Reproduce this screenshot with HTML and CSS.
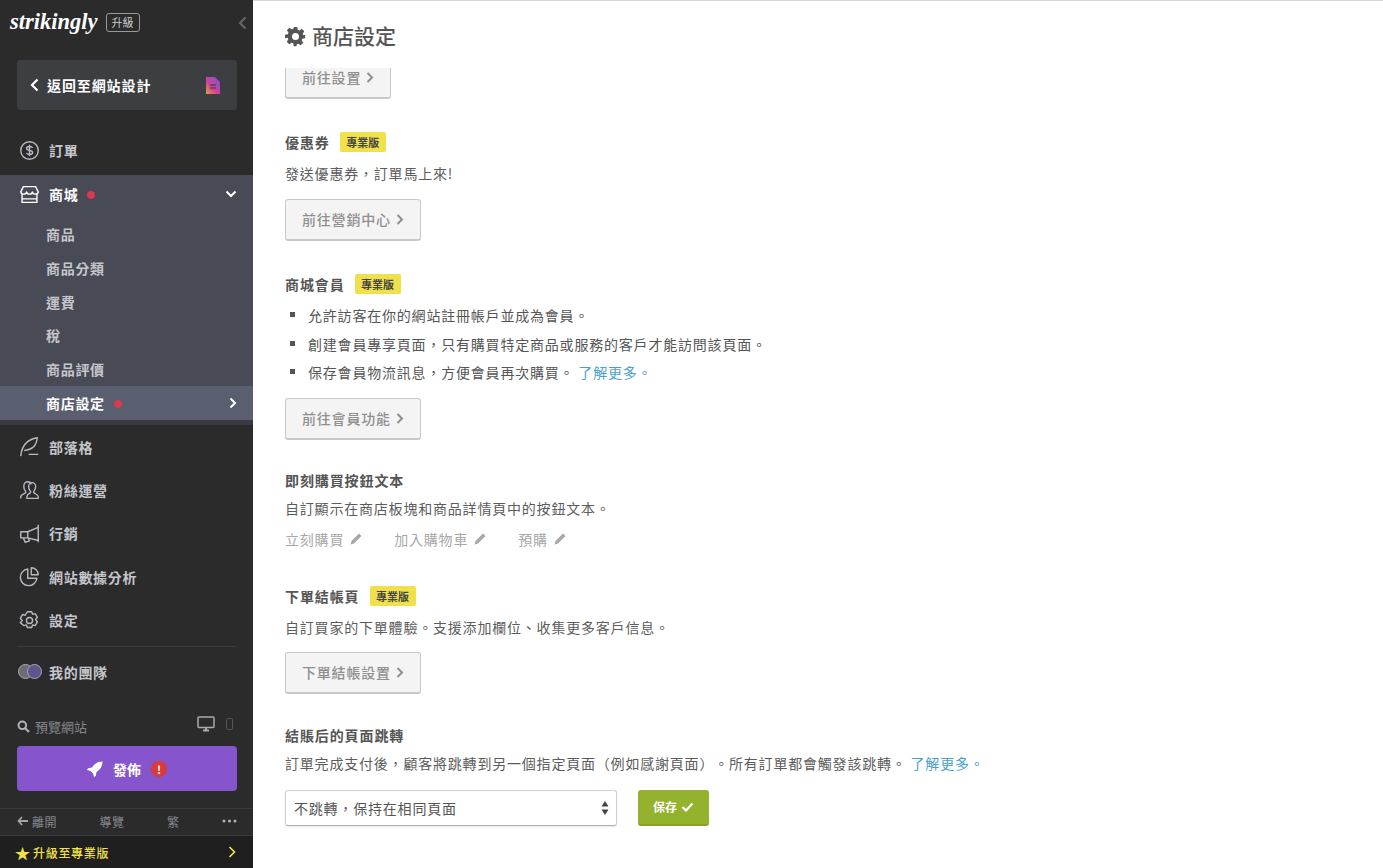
FILE: index.html
```html
<!DOCTYPE html>
<html lang="zh-Hant">
<head>
    <meta charset="UTF-8">
    <title>商店設定</title>
    <link rel="stylesheet" href="styles.css">
</head>
<body>
    <aside class="sidebar">
        <div class="brand">
            <span class="logo">strikingly</span>
            <span class="upgrade-tag">升級</span>
            <svg class="collapse" width="9" height="14" viewBox="0 0 9 14"><path d="M7.500 1.500 2 7l5.500 5.500" fill="none" stroke="#666" stroke-width="2.200"/></svg>
        </div>
        <div class="back-box">
            <svg width="9" height="14" viewBox="0 0 9 14"><path d="M7.500 1.500 2 7l5.500 5.500" fill="none" stroke="#fff" stroke-width="2.200"/></svg>
            <span class="back-label">返回至網站設計</span>
            <svg class="page-icon" width="16" height="19" viewBox="0 0 16 19">
                <defs><linearGradient id="pg" x1="0" y1="1" x2="1" y2="0"><stop offset="0" stop-color="#dca63c"/><stop offset=".4" stop-color="#d0458f"/><stop offset="1" stop-color="#7a50e0"/></linearGradient></defs>
                <path d="M1 1h9l5 5v12H1z" fill="url(#pg)"/><path d="M5 9h6M5 12h6" stroke="#3a3350" stroke-width="1.200"/>
            </svg>
        </div>

        <div class="nav-row top-row">
            <svg class="nav-icon" viewBox="0 0 24 24"><circle cx="12" cy="12" r="10"/><path d="M15.500 9c-.5-1-1.700-1.500-3.500-1.500-2 0-3.300.9-3.300 2.200 0 3 6.800 1.500 6.800 4.500 0 1.400-1.500 2.300-3.500 2.300-1.800 0-3-.6-3.500-1.600M12 5.500v13"/></svg>
            <span>訂單</span>
        </div>

        <div class="shop-group">
            <div class="nav-row shop-row">
                <svg class="nav-icon" viewBox="0 0 24 24"><path d="M5 3h14l3 6c-.5 3.500-6 3.500-6.700 0-.6 3.500-6 3.500-6.600 0-.7 3.500-6.200 3.500-6.700 0zM3.500 12v9h17v-9M3.500 17h17"/></svg>
                <span class="shop-label">商城</span>
                <i class="dot"></i>
                <svg class="row-arrow" width="12" height="8" viewBox="0 0 12 8"><path d="M1.500 1.500 6 6l4.500-4.500" fill="none" stroke="#fff" stroke-width="2"/></svg>
            </div>
            <a class="sub-row">商品</a>
            <a class="sub-row">商品分類</a>
            <a class="sub-row">運費</a>
            <a class="sub-row">稅</a>
            <a class="sub-row">商品評價</a>
            <a class="sub-row sub-active">商店設定<i class="dot"></i>
                <svg class="row-arrow" width="8" height="12" viewBox="0 0 8 12"><path d="M1.500 1.500 6 6l-4.500 4.500" fill="none" stroke="#fff" stroke-width="2"/></svg>
            </a>
        </div>

        <div class="nav-list">
            <div class="nav-row">
                <svg class="nav-icon" viewBox="0 0 24 24"><path d="M2 23c1-10 5-19 19-21-1 7-3 12-12 14l-3 .5M11 21h11"/></svg>
                <span>部落格</span>
            </div>
            <div class="nav-row">
                <svg class="nav-icon" viewBox="0 0 24 24"><path d="M2 21v-2c0-2 3-3 5-4 1-.5 1-2 0-3-1.200-1.200-1.500-3-1.500-5 0-3 2-5 4.500-5 2 0 3.500 1 4 3M9 21h13v-2c0-2-3-3-4.500-4-1-.5-1-2 0-3 1-1.200 1.500-2.500 1.500-4.500 0-2.500-2-4.500-4-4.500s-4 2-4 4.500c0 2 .5 3.300 1.500 4.500 1 1 1 2.500 0 3C11 16 9 17 9 19z"/></svg>
                <span>粉絲運營</span>
            </div>
            <div class="nav-row">
                <svg class="nav-icon" viewBox="0 0 24 24"><path d="M22 2v20M22 5 10 10H2v7h8l12 3M10 10v7M5 17l2 5 5-1.500-1.500-3.500"/></svg>
                <span>行銷</span>
            </div>
            <div class="nav-row">
                <svg class="nav-icon" viewBox="0 0 24 24"><path d="M10 3.500a9.500 9.500 0 1 0 10.500 10.500H10z"/><path d="M14 2a8 8 0 0 1 8 8h-8z"/></svg>
                <span>網站數據分析</span>
            </div>
            <div class="nav-row">
                <svg class="nav-icon" viewBox="0 0 24 24"><path d="M9.500 2h5l1 3 3-.8 2.500 4.300-2.200 2.500 2.200 2.500-2.500 4.300-3-.8-1 3h-5l-1-3-3 .8L1.500 14.500 3.700 12 1.500 9.500 4 5.200l3 .8z"/><circle cx="12" cy="12" r="3.500"/></svg>
                <span>設定</span>
            </div>
        </div>

        <div class="nav-row team-row">
            <span class="team-icon"><i></i><i></i></span>
            <span>我的團隊</span>
        </div>

        <div class="preview-row">
            <svg width="13" height="13" viewBox="0 0 13 13"><circle cx="5.300" cy="5.300" r="3.800" fill="none" stroke="#b0b2b8" stroke-width="2"/><path d="M8 8l4 4" stroke="#b0b2b8" stroke-width="2.200"/></svg>
            <span class="preview-label">預覽網站</span>
            <svg class="device" width="18" height="16" viewBox="0 0 18 16"><rect x="1" y="1" width="16" height="10.500" rx="1" fill="none" stroke="#a8aaaf" stroke-width="1.500"/><path d="M6 14.500h6M9 11.500v3" stroke="#a8aaaf" stroke-width="2"/></svg>
            <svg class="device-phone" width="7" height="12" viewBox="0 0 7 12"><rect x=".5" y=".5" width="6" height="11" rx="1" fill="none" stroke="#55575c"/></svg>
        </div>
        <button class="publish">
            <svg width="16" height="16" viewBox="0 0 16 16"><path d="M15.500.5C11 .5 7.500 2.500 5 6.500l-4 .7L0 9l3.500 1L6 12.500 7 16l1.800-1 .7-4c4-2.500 6-6 6-10.500z" fill="#fff"/></svg>
            <span>發佈</span>
            <i class="alert">!</i>
        </button>

        <div class="foot-row">
            <span class="foot-leave"><svg width="11" height="10" viewBox="0 0 11 10"><path d="M5 1 1.500 5 5 9M1.500 5H11" fill="none" stroke="#a0a2a8" stroke-width="1.800"/></svg>離開</span>
            <span>導覽</span>
            <span>繁</span>
            <svg width="15" height="4" viewBox="0 0 15 4"><circle cx="2" cy="2" r="1.500" fill="#b0b2b8"/><circle cx="7.500" cy="2" r="1.500" fill="#b0b2b8"/><circle cx="13" cy="2" r="1.500" fill="#b0b2b8"/></svg>
        </div>
        <div class="upgrade-row">
            <span class="upgrade-text"><i class="star">★</i>升級至專業版</span>
            <svg width="8" height="12" viewBox="0 0 8 12"><path d="M1.500 1 6.500 6l-5 5" fill="none" stroke="#f2e24a" stroke-width="1.600"/></svg>
        </div>
    </aside>

    <main class="main">
        <h1 class="page-title">
            <svg width="21" height="21" viewBox="0 0 24 24"><path fill="#555" fill-rule="evenodd" d="M10 1h4l.6 3.200 1.800.8 2.800-1.800 2.800 2.800-1.800 2.800.8 1.800L23 10v4l-3.200.6-.8 1.800 1.800 2.800-2.800 2.800-2.800-1.800-1.800.8L13 23h-3l-.6-3.200-1.800-.8-2.800 1.800-2.800-2.800 1.800-2.800-.8-1.800L0 14v-4l3.200-.6.8-1.800L2.200 4.800 5 2l2.800 1.800 1.800-.8zM12 8a4 4 0 1 0 0 8 4 4 0 0 0 0-8z"/></svg>
            商店設定
        </h1>

        <a class="btn btn-cut">前往設置<svg class="chev" viewBox="0 0 8 11"><path d="M1.500 1 6 5.500 1.500 10"/></svg></a>

        <section class="block first">
            <h3>優惠券<span class="pro">專業版</span></h3>
            <p>發送優惠券&#xFF0C;訂單馬上來!</p>
            <a class="btn">前往營銷中心<svg class="chev" viewBox="0 0 8 11"><path d="M1.500 1 6 5.500 1.500 10"/></svg></a>
        </section>

        <section class="block member">
            <h3>商城會員<span class="pro">專業版</span></h3>
            <ul>
                <li>允許訪客在你的網站註冊帳戶並成為會員。</li>
                <li>創建會員專享頁面&#xFF0C;只有購買特定商品或服務的客戶才能訪問該頁面。</li>
                <li>保存會員物流訊息&#xFF0C;方便會員再次購買。 <a class="link">了解更多。</a></li>
            </ul>
            <a class="btn">前往會員功能<svg class="chev" viewBox="0 0 8 11"><path d="M1.500 1 6 5.500 1.500 10"/></svg></a>
        </section>

        <section class="block buy-text">
            <h3>即刻購買按鈕文本</h3>
            <p>自訂顯示在商店板塊和商品詳情頁中的按鈕文本。</p>
            <div class="edit-row">
                <span>立刻購買<svg class="pencil" viewBox="0 0 12 12"><path d="M9 .5 11.500 3 4 10.500.5 11.500l1-3.500z"/></svg></span>
                <span>加入購物車<svg class="pencil" viewBox="0 0 12 12"><path d="M9 .5 11.500 3 4 10.500.5 11.500l1-3.500z"/></svg></span>
                <span>預購<svg class="pencil" viewBox="0 0 12 12"><path d="M9 .5 11.500 3 4 10.500.5 11.500l1-3.500z"/></svg></span>
            </div>
        </section>

        <section class="block checkout">
            <h3>下單結帳頁<span class="pro">專業版</span></h3>
            <p>自訂買家的下單體驗。支援添加欄位、收集更多客戶信息。</p>
            <a class="btn">下單結帳設置<svg class="chev" viewBox="0 0 8 11"><path d="M1.500 1 6 5.500 1.500 10"/></svg></a>
        </section>

        <section class="block redirect">
            <h3>結賬后的頁面跳轉</h3>
            <p>訂單完成支付後&#xFF0C;顧客將跳轉到另一個指定頁面&#xFF08;例如感謝頁面&#xFF09;。所有訂單都會觸發該跳轉。 <a class="link">了解更多。</a></p>
            <div class="save-row">
                <div class="select">不跳轉&#xFF0C;保持在相同頁面
                    <svg width="8" height="16" viewBox="0 0 8 16"><path d="M4 1l3.500 5.500h-7zM4 15 .5 9.500h7z" fill="#444"/></svg>
                </div>
                <button class="save">保存
                    <svg width="13" height="10" viewBox="0 0 13 10"><path d="M1.500 5 5 8.500 11.500 1.500" fill="none" stroke="#fff" stroke-width="2.200"/></svg>
                </button>
            </div>
        </section>
    </main>
</body>
</html>
```

FILE: styles.css
```css
* {
    margin: 0;
    padding: 0;
    box-sizing: border-box;
}

html, body {
    height: 100%;
    overflow: hidden;
}

body {
    display: flex;
    font-family: "Noto Sans CJK TC", "Noto Sans", sans-serif;
    background-color: white;
    color: #555;
    font-size: 14px;
    text-spacing-trim: space-all;
}

.sidebar {
    width: 253px;
    height: 868px;
    flex-shrink: 0;
    background-color: #2b2b2c;
    color: #c4c6cc;
    display: flex;
    flex-direction: column;
}

.brand {
    height: 45px;
    flex-shrink: 0;
    padding: 0 6px 0 10px;
    display: flex;
    align-items: center;
}

.logo {
    font-family: "Liberation Serif", serif;
    font-style: italic;
    font-weight: bold;
    font-size: 22.500px;
    color: white;
    line-height: 1;
}

.upgrade-tag {
    margin-left: 8px;
    width: 34px;
    text-align: center;
    border: 1px solid #999;
    border-radius: 3px;
    font-size: 11px;
    line-height: 17px;
    color: #ccc;
}

.collapse {
    margin-left: auto;
}

.back-box {
    margin: 15px 16px 0 17px;
    height: 50px;
    flex-shrink: 0;
    background-color: #3d3e42;
    border-radius: 3px;
    display: flex;
    align-items: center;
    padding: 0 16px 0 13px;
    color: white;
}

.back-label {
    margin-left: 8px;
    font-size: 14px;
    font-weight: 700;
    letter-spacing: .9px;
}

.page-icon {
    margin-left: auto;
}

.nav-row {
    height: 43.300px;
    flex-shrink: 0;
    padding-left: 19px;
    display: flex;
    align-items: center;
    font-weight: 700;
    font-size: 14px;
    letter-spacing: .7px;
}

.nav-icon {
    width: 21px;
    height: 21px;
    margin-right: 9px;
    fill: none;
    stroke: #b9bbc1;
    stroke-width: 1.600;
    stroke-linejoin: round;
}

.top-row {
    margin: 18.500px 0 3px;
}

.shop-group {
    background-color: #484a55;
    flex-shrink: 0;
    display: flex;
    flex-direction: column;
    border-bottom: 5px solid #3a3b42;
}

.shop-row {
    height: 40px;
    padding-bottom: 1px;
    color: white;
}

.shop-row .nav-icon {
    stroke: white;
}

.dot {
    width: 8px;
    height: 8px;
    border-radius: 50%;
    background-color: #d83a52;
    margin: 2px 0 0 9px;
    display: inline-block;
}

.row-arrow {
    margin-left: auto;
    margin-right: 16px;
}

.sub-row {
    height: 33.700px;
    flex-shrink: 0;
    padding-left: 46px;
    display: flex;
    align-items: center;
    font-weight: 700;
    letter-spacing: .7px;
    color: #c4c6cc;
}

.sub-row:first-of-type {
    margin-top: 2.500px;
}

.sub-active {
    margin-top: .5px;
    background-color: #5a5f70;
    color: white;
    height: 34px;
}

.team-row {
    margin-top: 8.400px;
    position: relative;
}

.team-row::before {
    content: "";
    position: absolute;
    left: 17px;
    right: 17px;
    top: -4px;
    border-top: 1px solid #3a3b3d;
}

.team-icon {
    width: 24px;
    height: 15px;
    margin-right: 7px;
    margin-left: -1px;
    display: flex;
}

.team-icon i {
    width: 15px;
    height: 15px;
    border-radius: 50%;
    background-color: #6a6c78;
    border: 1px solid #aaa;
}

.team-icon i + i {
    margin-left: -6px;
    background-color: #5f5490;
}

.preview-row {
    margin-top: 21px;
    padding: 0 20px 0 17px;
    display: flex;
    align-items: center;
    height: 24px;
    flex-shrink: 0;
    font-size: 13px;
    color: #85878c;
}

.preview-label {
    margin-left: 5px;
}

.device {
    margin-left: auto;
    margin-top: -4px;
}

.device-phone {
    margin-left: 11px;
    margin-top: -4px;
}

.publish {
    margin: 8px 16px 0 17px;
    height: 45px;
    flex-shrink: 0;
    background-color: #8654cc;
    border: none;
    border-radius: 4px;
    color: white;
    font-family: inherit;
    font-size: 14px;
    font-weight: 700;
    display: flex;
    align-items: center;
    justify-content: center;
    gap: 10px;
}

.alert {
    width: 16px;
    height: 16px;
    border-radius: 50%;
    background-color: #d93a3a;
    font-style: normal;
    font-size: 11px;
    line-height: 16px;
    text-align: center;
}

.foot-row {
    margin-top: 17px;
    border-top: 1px solid #3a3b3d;
    height: 25px;
    flex-shrink: 0;
    padding: 0 16px 0 17px;
    display: flex;
    align-items: center;
    justify-content: space-between;
    font-size: 12px;
    letter-spacing: .5px;
    color: #85878c;
}

.foot-leave {
    display: flex;
    align-items: center;
    gap: 4px;
}

.upgrade-row {
    margin-top: auto;
    height: 33px;
    background-color: #1f1f20;
    border-top: 1px solid #3a3b3d;
    padding: 0 17px 0 15px;
    display: flex;
    align-items: center;
    justify-content: space-between;
    color: #f2e24a;
    font-size: 12px;
    font-weight: 500;
    letter-spacing: .7px;
}

.upgrade-text {
    display: flex;
    align-items: center;
}

.star {
    font-style: normal;
    font-size: 15px;
    line-height: 1;
    margin-right: 3px;
    letter-spacing: 0;
}

.main {
    flex: 1;
    height: 868px;
    overflow: hidden;
    padding-left: 32px;
    border-top: 1px solid #d8d8d8;
}

.page-title {
    height: 67px;
    display: flex;
    align-items: center;
    gap: 6px;
    font-size: 21px;
    font-weight: 500;
    color: #555;
}

.page-title svg {
    margin-top: 4px;
}

.btn {
    display: inline-block;
    height: 42px;
    line-height: 39px;
    padding: 0 16px;
    background-color: #f4f4f4;
    border: 1px solid #c8c8c8;
    border-bottom-width: 2px;
    border-radius: 3px;
    color: #8f8f8f;
    font-weight: 500;
    font-size: 14px;
    letter-spacing: .8px;
    white-space: nowrap;
}

.chev {
    width: 8px;
    height: 11px;
    margin-left: 5px;
    fill: none;
    stroke: #8f8f8f;
    stroke-width: 2;
}

.btn-cut {
    height: 31px;
    line-height: 18px;
    border-top: none;
    border-radius: 0 0 3px 3px;
    display: block;
    width: 106px;
}

.block h3 {
    font-size: 14px;
    font-weight: 700;
    color: #555;
    line-height: 20px;
    letter-spacing: .9px;
    display: flex;
    align-items: center;
}

.pro {
    margin-left: 10px;
    width: 46px;
    text-align: center;
    background-color: #f0e04c;
    color: #444;
    font-size: 11px;
    font-weight: 700;
    line-height: 20px;
    letter-spacing: 0;
    border-radius: 2px;
}

.block p {
    line-height: 20px;
    letter-spacing: .8px;
    color: #5c5c5c;
}

.first {
    margin-top: 33px;
}

.first p {
    margin: 11px 0 16px;
}

.member {
    margin-top: 33px;
}

.block ul {
    list-style: none;
    margin: 11px 0 7px;
}

.block li {
    height: 28.500px;
    line-height: 20px;
    letter-spacing: .8px;
    padding-left: 23px;
    position: relative;
}

.block li::before {
    content: "";
    position: absolute;
    left: 5px;
    top: 7px;
    width: 5px;
    height: 5px;
    background-color: #555;
}

.link {
    color: #4a9fd0;
}

.buy-text {
    margin-top: 30px;
}

.buy-text p {
    margin-top: 8px;
}

.edit-row {
    margin-top: 11px;
    display: flex;
    gap: 32px;
    color: #a8a8a8;
    line-height: 20px;
    letter-spacing: .8px;
}

.pencil {
    width: 12px;
    height: 12px;
    margin-left: 6px;
    fill: #a8a8a8;
}

.checkout {
    margin-top: 37px;
}

.checkout p {
    margin: 11px 0 15px;
}

.redirect {
    margin-top: 31px;
}

.redirect p {
    margin-top: 8px;
}

.save-row {
    margin-top: 17px;
    display: flex;
    gap: 21px;
}

.select {
    width: 332px;
    height: 36px;
    border: 1px solid #d0d0d0;
    border-bottom-color: #b0b0b0;
    border-radius: 3px;
    padding: 0 7px 0 8px;
    display: flex;
    align-items: center;
    justify-content: space-between;
    letter-spacing: .8px;
    color: #555;
    box-shadow: 0 1px 2px rgba(0, 0, 0, .1);
}

.save {
    width: 71px;
    height: 36px;
    background-color: #94b22e;
    border: none;
    border-bottom: 2px solid #86a228;
    border-radius: 3px;
    color: white;
    font-family: inherit;
    font-size: 12px;
    font-weight: 700;
    display: flex;
    align-items: center;
    justify-content: center;
    gap: 4px;
}
```
